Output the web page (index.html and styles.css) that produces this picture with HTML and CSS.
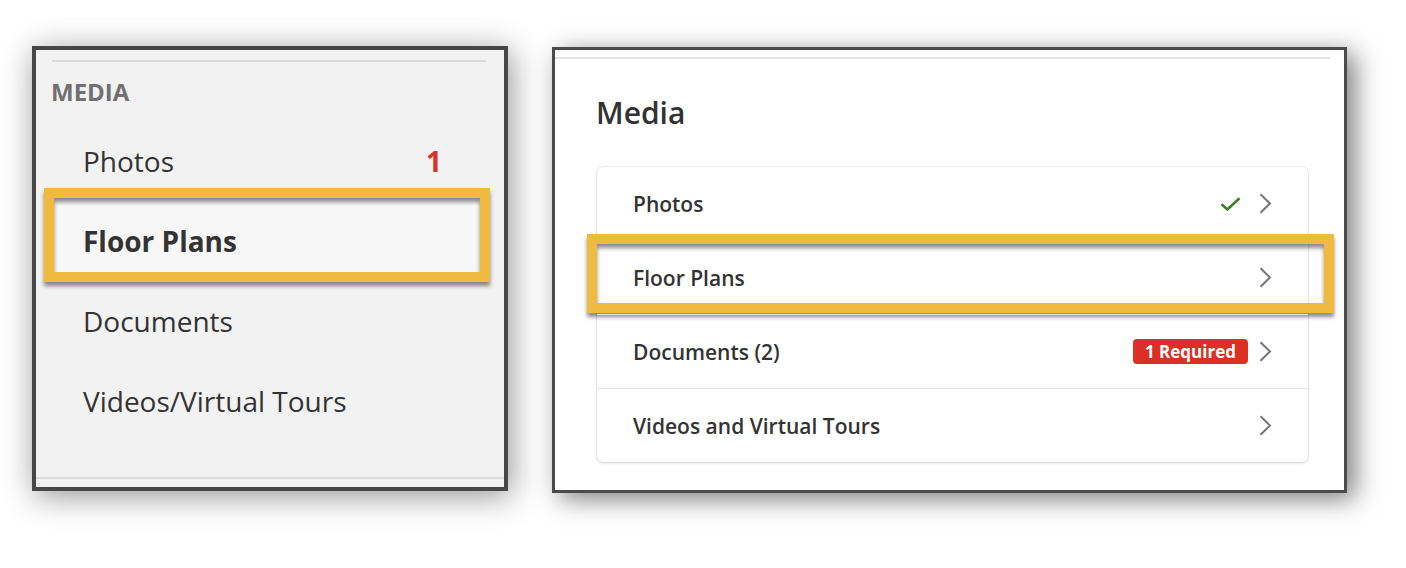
FILE: index.html
```html
<!DOCTYPE html>
<html lang="en">
<head>
    <meta charset="UTF-8">
    <meta name="viewport" content="width=device-width, initial-scale=1.0">
    <title>Media</title>
    <link rel="stylesheet" href="styles.css">
</head>
<body>

<main class="shots">
    <!-- old sidebar -->
    <section class="panel side">
        <div class="rule rule-top"></div>
        <h2 class="side-title">MEDIA</h2>
        <ul class="side-list">
            <li class="side-item"><span>Photos</span><span class="count">1</span></li>
            <li class="side-item selected"><span>Floor Plans</span></li>
            <li class="side-item"><span>Documents</span></li>
            <li class="side-item"><span>Videos/Virtual Tours</span></li>
        </ul>
        <div class="rule rule-bottom"></div>
    </section>

    <!-- new detail page -->
    <section class="panel detail">
        <div class="rule detail-rule"></div>
        <h2 class="detail-title">Media</h2>
        <ul class="card">
            <li class="card-row">
                <span>Photos</span>
                <span class="row-end">
                    <svg class="check" width="21" height="14" viewBox="0 0 21 14"><path d="M1.5 7.2 L7.4 12.4 L19.5 1.2" fill="none" stroke="#3b7d2b" stroke-width="2.6"/></svg>
                    <svg class="chev" width="13" height="21" viewBox="0 0 13 21"><path d="M1.5 1.2 L11 10.5 L1.5 19.8" fill="none" stroke="#767676" stroke-width="2"/></svg>
                </span>
            </li>
            <li class="card-row selected">
                <span>Floor Plans</span>
                <span class="row-end">
                    <svg class="chev" width="13" height="21" viewBox="0 0 13 21"><path d="M1.5 1.2 L11 10.5 L1.5 19.8" fill="none" stroke="#767676" stroke-width="2"/></svg>
                </span>
            </li>
            <li class="card-row">
                <span>Documents (2)</span>
                <span class="row-end">
                    <span class="badge">1 Required</span>
                    <svg class="chev" width="13" height="21" viewBox="0 0 13 21"><path d="M1.5 1.2 L11 10.5 L1.5 19.8" fill="none" stroke="#767676" stroke-width="2"/></svg>
                </span>
            </li>
            <li class="card-row">
                <span>Videos and Virtual Tours</span>
                <span class="row-end">
                    <svg class="chev" width="13" height="21" viewBox="0 0 13 21"><path d="M1.5 1.2 L11 10.5 L1.5 19.8" fill="none" stroke="#767676" stroke-width="2"/></svg>
                </span>
            </li>
        </ul>
    </section>
</main>

</body>
</html>
```

FILE: styles.css
```css
* {
    padding: 0;
    margin: 0;
    box-sizing: border-box;
}
html, body {
    min-height: 100%;
}
body {
    min-height: 568px;
    background: #fff;
    font-family: "Open Sans", "Liberation Sans", sans-serif;
    color: #333;
}
ul {
    list-style: none;
}
.shots {
    display: flex;
    align-items: flex-start;
    gap: 44px;
    padding: 46px 0 0 32px;
}
.panel {
    display: flex;
    flex-direction: column;
}
.rule {
    height: 2px;
}

/* left: sidebar */
.side {
    width: 476px;
    height: 445px;
    border: 4px solid #474747;
    background: #f2f2f2;
    padding-top: 10px;
    box-shadow: 3px 5px 30px rgba(0, 0, 0, 0.42);
}
.rule-top {
    background: #dadada;
    margin: 0 18px 0 16px;
}
.rule-bottom {
    background: #dcdcdc;
    margin-top: auto;
    margin-bottom: 8px;
}
.side-title {
    margin: 14px 0 0 15px;
    font-size: 24px;
    line-height: 32px;
    font-weight: 700;
    color: #707070;
}
.side-list {
    margin-top: 13px;
}
.side-item {
    height: 80px;
    padding: 0 62px 0 47px;
    display: flex;
    align-items: center;
    justify-content: space-between;
    font-size: 28px;
    color: #333;
    position: relative;
    z-index: 0;
}
.side-item .count {
    color: #d8322a;
    font-weight: 700;
}
.side-item.selected {
    font-weight: 700;
}
.side-item.selected::before {
    content: "";
    position: absolute;
    top: -13px;
    bottom: -1px;
    left: 8px;
    right: 14px;
    z-index: -1;
    background: #f7f7f7;
    border: 10px solid #efbb3f;
    box-shadow: 0 4px 4px rgba(0, 0, 0, 0.45), inset 0 4px 4px rgba(0, 0, 0, 0.45);
}

/* right: detail page */
.detail {
    width: 795px;
    height: 446px;
    margin-top: 1px;
    border: 3px solid #4b4b4b;
    background: #fff;
    padding-top: 7px;
    box-shadow: 8px 6px 24px rgba(0, 0, 0, 0.5);
}
.detail-rule {
    background: #e3e3e3;
    margin-right: 14px;
}
.detail-title {
    margin: 33px 0 0 41px;
    font-size: 30px;
    line-height: 41px;
    font-weight: 600;
    color: #333;
}
.card {
    margin: 34px 36px 0 42px;
    background: #fff;
    border-radius: 6px;
    box-shadow: 0 1px 3px rgba(0, 0, 0, 0.16), 0 0 0 1px #f3f3f3;
}
.card-row {
    height: 73px;
    padding: 0 36px 0 36px;
    display: flex;
    align-items: center;
    justify-content: space-between;
    font-size: 21px;
    font-weight: 600;
    color: #333;
    position: relative;
    z-index: 0;
}
.card-row + .card-row {
    height: 74px;
    border-top: 1px solid #e3e3e3;
}
.card-row.selected::before {
    content: "";
    position: absolute;
    top: -7px;
    bottom: 1px;
    left: -10px;
    right: -26px;
    z-index: -1;
    border: 10px solid #efbb3f;
    box-shadow: 0 4px 4px rgba(0, 0, 0, 0.45), inset 0 4px 4px rgba(0, 0, 0, 0.45);
}
.row-end {
    display: flex;
    align-items: center;
}
.check {
    margin-right: 18px;
}
.badge {
    margin-right: 11px;
    background: #dc3024;
    color: #fff;
    font-size: 17px;
    font-weight: 700;
    line-height: 25px;
    padding: 0 12px;
    border-radius: 4px;
}
.chev {
    display: block;
}
```
